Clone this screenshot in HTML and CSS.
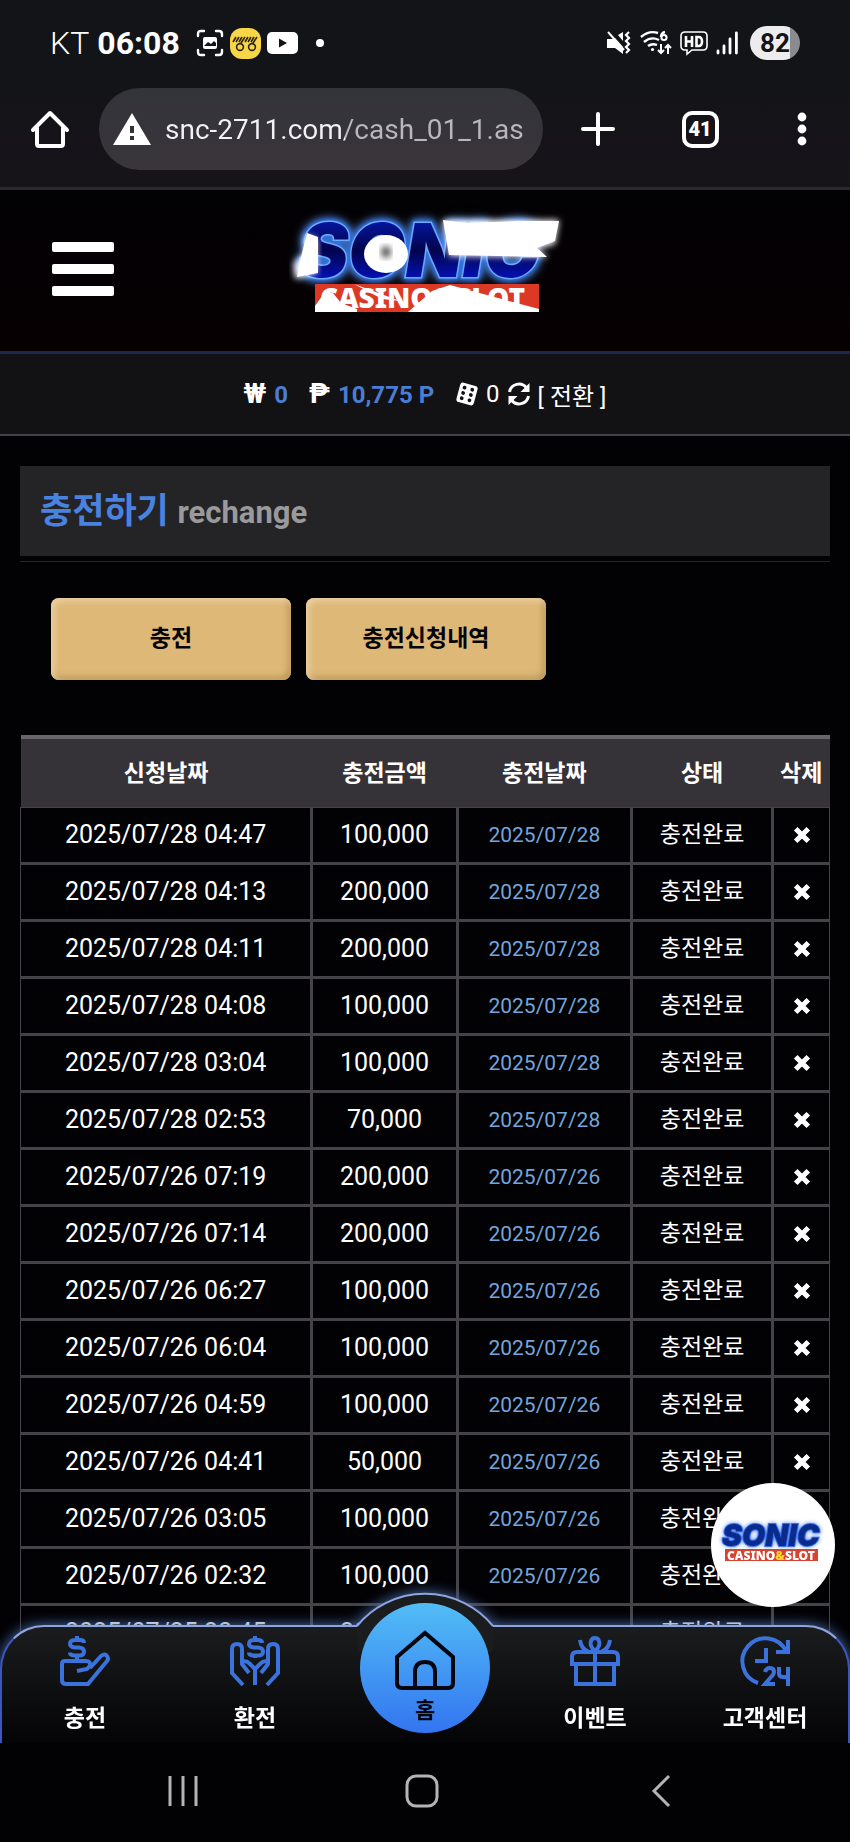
FILE: index.html
```html
<!DOCTYPE html>
<html lang="ko">
<head>
    <meta charset="UTF-8">
    <meta name="viewport" content="width=device-width, initial-scale=1.0">
    <title>충전하기</title>
    <link rel="stylesheet" href="styles.css">
</head>
<body>
<svg class="defs" aria-hidden="true">
    <symbol id="icon-x" viewBox="0 0 20 20">
        <path d="M3 3l14 14M17 3L3 17" stroke="#fff" stroke-width="5.6"/>
    </symbol>
</svg>

<!-- 상태바 -->
<div class="status-bar">
    <span class="carrier">KT</span>
    <span class="clock">06:08</span>
    <svg class="st-shot" viewBox="0 0 28 28" fill="none" stroke="#fff" stroke-width="2.4" stroke-linecap="round">
        <path d="M2 7V5q0-3 3-3h3M20 2h3q3 0 3 3v2M26 21v2q0 3-3 3h-3M8 26H5q-3 0-3-3v-2"/>
        <rect x="7" y="8" width="14" height="12" rx="2" fill="#fff" stroke="none"/>
        <path d="M8 17l4-4 3 2 3-3 2 2v3z" fill="#131418" stroke="none"/>
    </svg>
    <svg class="st-app" viewBox="0 0 31 31">
        <rect width="31" height="31" rx="12" fill="#f8d648"/>
        <g fill="none" stroke="#2b2410" stroke-width="1.6">
            <circle cx="10" cy="19" r="3.4"/><circle cx="22" cy="19" r="3.4"/>
            <path d="M3 14l3-5M6 14l3-5M9 14l3-5M11 15l4-6M15 14l3-5M18 14l3-5M21 14l3-5M23 15l4-6"/>
        </g>
    </svg>
    <svg class="st-tube" viewBox="0 0 31 22">
        <rect width="31" height="22" rx="5" fill="#fff"/>
        <path d="M12 6.500v9l8-4.500z" fill="#131418"/>
    </svg>
    <span class="st-dot"></span>
    <div class="status-right">
        <svg class="st-mute" viewBox="0 0 26 26" fill="none" stroke="#fff" stroke-width="2">
            <path d="M1 9h5l3-1 8 9v7l-8-6H1zM12 5l5-3v9z" fill="#fff" stroke="none"/>
            <path d="M2 2l16 18"/>
            <path d="M23 2l-3 3 3 3-3 3 3 3-3 3 3 3-3 3" stroke-width="2.200"/>
        </svg>
        <svg class="st-wifi" viewBox="0 0 32 26" fill="none" stroke="#fff" stroke-width="2.400">
            <path d="M1 7Q9 0 18 3M4 12q7-6 15-2M8 16q4-3 9-1"/>
            <circle cx="12.500" cy="19.500" r="1.600" fill="#fff" stroke="none"/>
            <path d="M25 2q-4 1-4 5"/><circle cx="24" cy="7.500" r="2.600" stroke-width="2"/>
            <path d="M21 14v9M18 20l3 3 3-3M28 24v-9M25 18l3-3 3 3" stroke-width="2"/>
        </svg>
        <svg class="st-hd" viewBox="0 0 28 26" fill="none" stroke="#fff" stroke-width="2.600">
            <path d="M5 2h18q4 0 4 4v10q0 4-4 4H12l-5 4v-4H5q-4 0-4-4V6q0-4 4-4z" stroke-width="1.600"/>
            <path d="M6 6v11M12 6v11M6 11.500h6M16.500 7v9h2q3.500 0 3.500-4.500T18.500 7z"/>
        </svg>
        <svg class="st-signal" viewBox="0 0 22 24" stroke="#fff" stroke-width="2.800" stroke-linecap="round">
            <path d="M2 20v2M8 15v7M14 8v14M20.400 2v20"/>
        </svg>
        <span class="battery">82</span>
    </div>
</div>

<!-- 브라우저 주소창 -->
<div class="browser-bar">
    <button class="bar-btn" aria-label="홈페이지">
        <svg width="38" height="38" viewBox="0 0 38 38" fill="none" stroke="#fff" stroke-width="4" stroke-linejoin="round" stroke-linecap="round">
            <path d="M2 20L19 3l17 17M6 18v16q0 2 2 2h22q2 0 2-2V18"/>
        </svg>
    </button>
    <div class="address">
        <svg width="38" height="32" viewBox="0 0 38 32">
            <path d="M19 0l19 32H0z" fill="#fff"/>
            <path d="M19 13v7M19 23v4" stroke="#36343a" stroke-width="4"/>
        </svg>
        <input type="text" value="snc-2711.com/cash_01_1.as" aria-label="주소">
    </div>
    <div class="bar-actions">
        <button class="bar-btn" aria-label="새 탭">
            <svg width="34" height="34" viewBox="0 0 34 34" stroke="#fff" stroke-width="4" stroke-linecap="round"><path d="M17 2v30M2 17h30"/></svg>
        </button>
        <button class="bar-btn" aria-label="탭 41개"><span class="tab-count">41</span></button>
        <button class="bar-btn" aria-label="메뉴">
            <svg width="10" height="34" viewBox="0 0 10 34" fill="#fff"><circle cx="5" cy="5" r="4.400"/><circle cx="5" cy="17" r="4.400"/><circle cx="5" cy="29" r="4.400"/></svg>
        </button>
    </div>
</div>

<header>
    <button class="menu-btn" aria-label="전체메뉴"><i></i><i></i><i></i></button>
    <a href="#" class="logo" aria-label="SONIC CASINO&amp;SLOT">
        <svg width="280" height="104" viewBox="0 0 280 104">
            <defs>
                <filter id="soft" x="-20%" y="-20%" width="140%" height="140%"><feGaussianBlur stdDeviation="3"/></filter>
                <linearGradient id="sonicFill" x1="0" y1="0" x2="0" y2="1">
                    <stop offset="0" stop-color="#0820d0"/><stop offset=".5" stop-color="#02044c"/><stop offset="1" stop-color="#0418f0"/>
                </linearGradient>
            </defs>
            <text class="sonic" x="14" y="62" fill="url(#sonicFill)">SONIC</text>
            <g fill="#fff">
                <path d="M20 20l12 4v34L10 64 9 48l10-8z" filter="url(#soft)"/>
                <path d="M22 18l11 4v36L12 62l3-16z"/>
                <ellipse cx="101" cy="39" rx="22" ry="19"/>
                <ellipse cx="101" cy="37" rx="5" ry="6" fill="#555" filter="url(#soft)"/>
                <path d="M158 5h116l-4 24-20 5 14 8-100-1z" filter="url(#soft)"/>
                <path d="M158 5l22 3 60-2h34l-4 20-18 7 10 9-98-2z"/>
            </g>
            <rect x="30" y="69" width="224" height="28" fill="#dc3826"/>
            <text class="casino" x="35" y="93">CASINO&amp;SLOT</text>
            <path d="M30 97V91l10-14 8 1 8 10 16 6v3zM69 69l46 17-18-2zM123 97l24-21 18-6 89 24v3z" fill="#fff"/>
        </svg>
    </a>
</header>

<div class="balance">
    <span class="cash"><b class="sign">₩</b> <b>0</b></span>
    <span class="point"><b class="sign">₱</b> <b>10,775 P</b></span>
    <span class="slot">
        <svg width="24" height="24" viewBox="0 0 24 24">
            <g transform="rotate(15 12 12)"><rect x="3" y="2" width="18" height="20" rx="3" fill="#fff"/>
            <g fill="#121114"><circle cx="8" cy="6.500" r="1.900"/><circle cx="8" cy="12" r="1.900"/><circle cx="8" cy="17.500" r="1.900"/><circle cx="16" cy="6.500" r="1.900"/><circle cx="16" cy="12" r="1.900"/><circle cx="16" cy="17.500" r="1.900"/></g></g>
        </svg>
        0
        <svg width="24" height="24" viewBox="0 0 24 24" fill="none" stroke="#fff" stroke-width="3">
            <path d="M2.500 10a9.500 9.500 0 0 1 17-4M21.500 14a9.500 9.500 0 0 1-17 4"/>
            <path d="M22.500 1v9h-9zM1.500 23v-9h9z" fill="#fff" stroke="none"/>
        </svg>
        <a href="#">[ 전환 ]</a>
    </span>
</div>

<main>
    <h1>충전하기 <small>rechange</small></h1>
    <div class="tabs">
        <button>충전</button>
        <button>충전신청내역</button>
    </div>
    <table>
        <colgroup><col class="c-req"><col class="c-amount"><col class="c-date"><col class="c-state"><col class="c-del"></colgroup>
        <thead>
            <tr><th>신청날짜</th><th>충전금액</th><th>충전날짜</th><th>상태</th><th>삭제</th></tr>
        </thead>
        <tbody>
            <tr><td>2025/07/28 04:47</td><td>100,000</td><td class="date">2025/07/28</td><td class="state">충전완료</td><td><button aria-label="삭제"><svg><use href="#icon-x"/></svg></button></td></tr>
            <tr><td>2025/07/28 04:13</td><td>200,000</td><td class="date">2025/07/28</td><td class="state">충전완료</td><td><button aria-label="삭제"><svg><use href="#icon-x"/></svg></button></td></tr>
            <tr><td>2025/07/28 04:11</td><td>200,000</td><td class="date">2025/07/28</td><td class="state">충전완료</td><td><button aria-label="삭제"><svg><use href="#icon-x"/></svg></button></td></tr>
            <tr><td>2025/07/28 04:08</td><td>100,000</td><td class="date">2025/07/28</td><td class="state">충전완료</td><td><button aria-label="삭제"><svg><use href="#icon-x"/></svg></button></td></tr>
            <tr><td>2025/07/28 03:04</td><td>100,000</td><td class="date">2025/07/28</td><td class="state">충전완료</td><td><button aria-label="삭제"><svg><use href="#icon-x"/></svg></button></td></tr>
            <tr><td>2025/07/28 02:53</td><td>70,000</td><td class="date">2025/07/28</td><td class="state">충전완료</td><td><button aria-label="삭제"><svg><use href="#icon-x"/></svg></button></td></tr>
            <tr><td>2025/07/26 07:19</td><td>200,000</td><td class="date">2025/07/26</td><td class="state">충전완료</td><td><button aria-label="삭제"><svg><use href="#icon-x"/></svg></button></td></tr>
            <tr><td>2025/07/26 07:14</td><td>200,000</td><td class="date">2025/07/26</td><td class="state">충전완료</td><td><button aria-label="삭제"><svg><use href="#icon-x"/></svg></button></td></tr>
            <tr><td>2025/07/26 06:27</td><td>100,000</td><td class="date">2025/07/26</td><td class="state">충전완료</td><td><button aria-label="삭제"><svg><use href="#icon-x"/></svg></button></td></tr>
            <tr><td>2025/07/26 06:04</td><td>100,000</td><td class="date">2025/07/26</td><td class="state">충전완료</td><td><button aria-label="삭제"><svg><use href="#icon-x"/></svg></button></td></tr>
            <tr><td>2025/07/26 04:59</td><td>100,000</td><td class="date">2025/07/26</td><td class="state">충전완료</td><td><button aria-label="삭제"><svg><use href="#icon-x"/></svg></button></td></tr>
            <tr><td>2025/07/26 04:41</td><td>50,000</td><td class="date">2025/07/26</td><td class="state">충전완료</td><td><button aria-label="삭제"><svg><use href="#icon-x"/></svg></button></td></tr>
            <tr><td>2025/07/26 03:05</td><td>100,000</td><td class="date">2025/07/26</td><td class="state">충전완료</td><td><button aria-label="삭제"><svg><use href="#icon-x"/></svg></button></td></tr>
            <tr><td>2025/07/26 02:32</td><td>100,000</td><td class="date">2025/07/26</td><td class="state">충전완료</td><td><button aria-label="삭제"><svg><use href="#icon-x"/></svg></button></td></tr>
            <tr><td>2025/07/25 23:45</td><td>200,000</td><td class="date">2025/07/25</td><td class="state">충전완료</td><td><button aria-label="삭제"><svg><use href="#icon-x"/></svg></button></td></tr>
        </tbody>
    </table>
</main>

<a href="#" class="float-logo" aria-label="SONIC CASINO&amp;SLOT">
    <svg width="116" height="48" viewBox="0 0 116 48">
        <text class="mini-sonic" x="7" y="25">SONIC</text>
        <rect x="10" y="28" width="93" height="12" fill="#d8432f"/>
        <text class="mini-casino" x="56" y="39" text-anchor="middle">CASINO<tspan fill="#ffd52e">&amp;</tspan>SLOT</text>
    </svg>
</a>

<div class="dock">
    <nav>
        <div class="nav-shape">
            <svg width="160" height="60" viewBox="0 0 160 60">
                <path d="M12 34A88 88 0 0 1 148 34V60H12z" fill="#1b1c1e"/>
                <path d="M12 34A88 88 0 0 1 148 34" fill="none" stroke="#8ea4e0" stroke-width="2"/>
            </svg>
        </div>
        <a href="#">
            <svg viewBox="0 0 50 50">
                <path d="M2 28q0-3 3-3h21q5 0 4 5l-3 3-10 2M30 32l11-12q4-3 6 0 2 3 0 5L28 48H6q-4 0-4-4V28M17 21v4"/>
                <path d="M24 7q0-3-4-3h-5q-5 0-5 4 0 3 5 3.500h4q5 .5 5 4 0 4-5 4h-4q-5 0-5-3M17 0v4M17 19v3"/>
            </svg>
            충전
        </a>
        <a href="#">
            <svg viewBox="0 0 50 50">
                <path d="M13 49L2 37V13q0-5 5-5t5 5v15l7 9M12 26q4-2 8 2l5 5v16M38 26q-4-2-8 2l-5 5M37 49l11-12V13q0-5-5-5t-5 5v15l-7 9"/>
                <path d="M32 7q0-3-4-3h-4q-5 0-5 4 0 3 5 3.500h4q5 .5 5 4 0 4-5 4h-4q-5 0-5-3M25 0v4M25 19v3"/>
            </svg>
            환전
        </a>
        <a href="#" class="nav-home">
            <svg viewBox="0 0 60 60">
                <path d="M2 27L30 3l28 24v26q0 5-5 5H7q-5 0-5-5zM20 58V42q0-10 10-10t10 10v16"/>
            </svg>
            홈
        </a>
        <a href="#">
            <svg viewBox="0 0 50 50">
                <path d="M6 28v20h38V28M2 28v-7q0-5 5-5h36q5 0 5 5v7zM25 16v32M25 15q-6-5-4-10 1-3 4-3t4 3q2 5-4 10M10 4q1 9 9 12M40 4q-1 9-9 12"/>
            </svg>
            이벤트
        </a>
        <a href="#">
            <svg viewBox="0 0 50 50">
                <path d="M18 47A23 23 0 1 1 46 15M36 16h12V4M26 12v13H15" />
                <path d="M25 36q1-4 5-4 4 0 4 4 0 2-3 5l-6 7h10M39 31v6q0 4 4 4h5M48 31v19"/>
            </svg>
            고객센터
        </a>
    </nav>
    <div class="sys-nav">
        <button aria-label="최근 앱"><svg width="32" height="34" viewBox="0 0 32 34"><path d="M3 2v30M16 2v30M29 2v30"/></svg></button>
        <button aria-label="홈 화면"><svg width="34" height="34" viewBox="0 0 34 34"><rect x="2" y="2" width="30" height="30" rx="9"/></svg></button>
        <button aria-label="뒤로"><svg width="20" height="34" viewBox="0 0 20 34"><path d="M18 2L3 17l15 15"/></svg></button>
    </div>
</div>
</body>
</html>
```

FILE: styles.css
```css
*{
    box-sizing: border-box;
}
body{
    margin: 0;
    height: 100vh;
    overflow: hidden;
    display: flex;
    flex-direction: column;
    background-color: #020104;
    color: #fff;
    font-family: Roboto, "Noto Sans CJK KR", sans-serif;
}
a{
    color: inherit;
    text-decoration: none;
}
button{
    padding: 0;
    border: none;
    background: none;
    color: inherit;
    font-family: inherit;
}
svg{
    flex: none;
    overflow: visible;
}
.defs{
    position: absolute;
    width: 0;
    height: 0;
}
/*상태바*/
.status-bar{
    flex: none;
    display: flex;
    align-items: center;
    gap: 6px;
    height: 86px;
    padding: 0 50px;
    background-color: #131418;
    font-size: 32px;
}
.carrier{
    font-weight: 300;
}
.clock{
    margin: 0 10px 0 2px;
    font-weight: 700;
}
.st-shot{
    width: 28px;
    height: 28px;
}
.st-app{
    width: 31px;
    height: 31px;
}
.st-tube{
    width: 31px;
    height: 22px;
}
.st-dot{
    width: 8px;
    height: 8px;
    margin-left: 12px;
    border-radius: 50%;
    background-color: #fff;
}
.status-right{
    display: flex;
    align-items: center;
    gap: 8px;
    margin-left: auto;
}
.st-mute{
    width: 26px;
    height: 26px;
}
.st-wifi{
    width: 32px;
    height: 26px;
}
.st-hd{
    width: 28px;
    height: 26px;
}
.st-signal{
    width: 22px;
    height: 24px;
}
.battery{
    width: 50px;
    height: 34px;
    margin-left: 4px;
    border-radius: 17px;
    background: linear-gradient(to right, #ececee 40px, #8b8b8f 40px);
    color: #131418;
    font-size: 26px;
    font-weight: 700;
    line-height: 34px;
    text-align: center;
}
/*주소창*/
.browser-bar{
    flex: none;
    display: flex;
    align-items: center;
    height: 104px;
    padding: 2px 20px 17px 22px;
    border-bottom: 3px solid #2b272f;
    background: linear-gradient(#131418, #17131a);
}
.bar-btn{
    display: flex;
    align-items: center;
    justify-content: center;
    width: 56px;
    height: 56px;
}
.address{
    flex: 1;
    display: flex;
    align-items: center;
    gap: 14px;
    min-width: 0;
    height: 82px;
    margin: 0 27px 0 21px;
    padding: 0 4px 0 14px;
    border-radius: 41px;
    background: linear-gradient(#33343a, #39353b);
}
.address input{
    flex: 1;
    min-width: 0;
    height: 44px;
    padding: 0;
    border: none;
    outline: none;
    background: linear-gradient(to right, #f2f1f6 180px, #b9b8bf 180px);
    -webkit-background-clip: text;
    background-clip: text;
    color: transparent;
    font-family: inherit;
    font-size: 28px;
}
.bar-actions{
    display: flex;
    gap: 46px;
}
.tab-count{
    width: 37px;
    height: 37px;
    border: 4px solid #fff;
    border-radius: 10px;
    font-size: 20px;
    font-weight: 900;
    line-height: 29px;
    text-align: center;
}
/*헤더*/
header{
    flex: none;
    position: relative;
    display: flex;
    justify-content: center;
    height: 164px;
    padding-top: 25px;
    border-bottom: 3px solid #1f2950;
    background: linear-gradient(#020104, #070002);
}
.menu-btn{
    position: absolute;
    left: 52px;
    top: 52px;
    display: flex;
    flex-direction: column;
    gap: 12px;
    width: 62px;
}
.menu-btn i{
    height: 10px;
    border-radius: 2px;
    background-color: #fff;
}
.sonic{
    stroke: #6aa8f8;
    stroke-width: 3px;
    paint-order: stroke;
    filter: drop-shadow(0 0 2px #2f7af0) drop-shadow(0 0 3px #2f66d8) drop-shadow(0 0 4px #4f78b8);
    font-family: Inter, sans-serif;
    font-size: 74px;
    font-weight: 900;
    font-style: italic;
}
.casino{
    fill: #fff;
    font-family: "Noto Sans", sans-serif;
    font-size: 28px;
    font-weight: 900;
}
/*보유금액*/
.balance{
    flex: none;
    display: flex;
    align-items: center;
    justify-content: center;
    gap: 21px;
    height: 82px;
    border-bottom: 2px solid #444247;
    background-color: #121114;
    font-size: 24px;
}
.balance b{
    color: #4a7ed4;
}
.balance .sign{
    margin-right: 2px;
    color: #fff;
    font-size: 28px;
    line-height: 28px;
}
.slot{
    display: flex;
    align-items: center;
    gap: 7px;
}
/*본문*/
main{
    flex: 1;
    min-height: 0;
    padding: 30px 20px 0;
    overflow: hidden;
}
h1{
    position: relative;
    margin: 0 0 42px;
    padding: 0 20px;
    height: 90px;
    background-color: #242326;
    color: #4a82e0;
    font-size: 35px;
    line-height: 92px;
}
h1::after{
    content: "";
    position: absolute;
    left: 0;
    right: 0;
    bottom: -6px;
    height: 1px;
    background-color: #242326;
}
h1 small{
    color: #9a999c;
    font-size: 31px;
}
.tabs{
    display: flex;
    gap: 15px;
    margin: 0 31px 55px;
}
.tabs button{
    width: 240px;
    height: 82px;
    border-radius: 8px;
    background-color: #deb877;
    box-shadow: inset 3px 3px 6px #ecd0a6, inset -3px -3px 6px #b89658;
    color: #050304;
    font-size: 23px;
    font-weight: 700;
    line-height: 30px;
}
/*신청내역*/
table{
    width: 100%;
    table-layout: fixed;
    border-collapse: collapse;
}
.c-req{
    width: 36%;
}
.c-amount{
    width: 18%;
}
.c-date{
    width: 21.5%;
}
.c-state{
    width: 17.5%;
}
.c-del{
    width: 7%;
}
th{
    height: 70px;
    padding: 0 0 4px;
    border-top: 4px solid #67646a;
    background-color: #363338;
    font-size: 23px;
    font-weight: 700;
}
td{
    height: 57px;
    padding: 0;
    border: 3px solid #454347;
    font-size: 25px;
    line-height: 30px;
    text-align: center;
}
td:first-child{
    border-left-width: 1px;
}
td:last-child{
    border-right-width: 1px;
}
tbody tr:first-child td{
    height: 56px;
    border-top-width: 1px;
}
td.date{
    color: #74a5dc;
    font-size: 21px;
}
td.state{
    font-size: 23px;
}
td button{
    display: block;
    margin: 0 auto;
}
td svg{
    display: block;
    width: 18px;
    height: 18px;
}
/*플로팅 로고*/
.float-logo{
    position: fixed;
    right: 15px;
    bottom: 235px;
    display: flex;
    align-items: center;
    justify-content: center;
    width: 124px;
    height: 124px;
    border-radius: 50%;
    background-color: #fff;
}
.mini-sonic{
    fill: #0a2a8c;
    stroke: #3a6ff0;
    stroke-width: 2px;
    paint-order: stroke;
    filter: drop-shadow(0 0 2px #5f90f0);
    font-family: Inter, sans-serif;
    font-size: 30px;
    font-weight: 900;
    font-style: italic;
}
.mini-casino{
    fill: #fff;
    font-family: "Noto Sans", sans-serif;
    font-size: 12px;
    font-weight: 900;
}
/*하단 메뉴*/
.dock{
    position: fixed;
    left: 0;
    right: 0;
    bottom: 0;
}
nav{
    position: relative;
    display: grid;
    grid-template-columns: repeat(5, 1fr);
    height: 118px;
}
.nav-shape{
    position: absolute;
    inset: 0;
    border: 2px solid #8ea4e0;
    border-color: #8ea4e0 #3c55c0 transparent;
    border-bottom: none;
    border-radius: 44px 44px 0 0;
    background: linear-gradient(#1b1c1e, #040406);
    filter: drop-shadow(0 0 7px #4a6ea8);
}
.nav-shape svg{
    position: absolute;
    left: calc(50% - 80px);
    top: -35px;
}
nav a{
    position: relative;
    display: flex;
    flex-direction: column;
    align-items: center;
    gap: 16px;
    padding-top: 11px;
    font-size: 23px;
    font-weight: 700;
    line-height: 34px;
}
nav a svg{
    width: 50px;
    height: 50px;
    fill: none;
    stroke: #3c72dc;
    stroke-width: 4px;
}
nav .nav-home{
    justify-self: center;
    gap: 4px;
    width: 130px;
    height: 130px;
    margin-top: -22px;
    padding-top: 27px;
    border-radius: 50%;
    background: linear-gradient(#52bdf6, #3375f0);
    color: #03060f;
    font-size: 22px;
}
.nav-home svg{
    width: 60px;
    height: 60px;
    stroke: #03060f;
}
.sys-nav{
    position: relative;
    display: grid;
    grid-template-columns: repeat(3, 1fr);
    height: 99px;
    padding: 0 70px 4px 64px;
    background-color: #020104;
}
.sys-nav button{
    display: flex;
    align-items: center;
    justify-content: center;
}
.sys-nav svg{
    fill: none;
    stroke: #b4b3b6;
    stroke-width: 3px;
}
```
